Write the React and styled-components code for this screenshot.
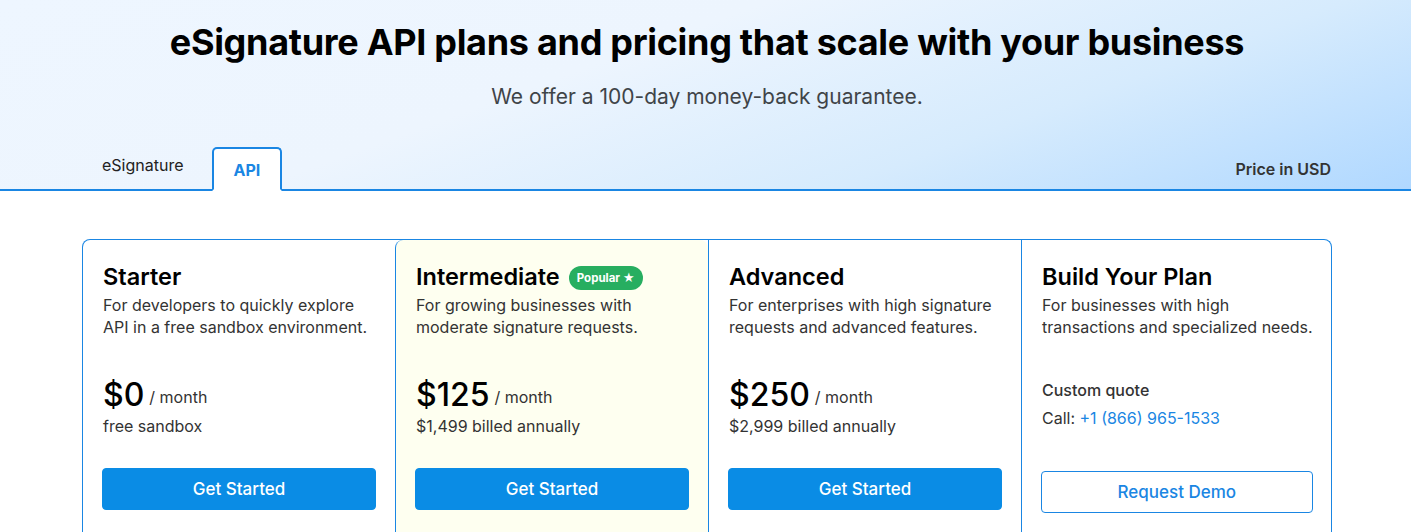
import React from "react";
import styled, { createGlobalStyle } from "styled-components";

const Global = createGlobalStyle`
  html, body { margin: 0; padding: 0; background: #fff; }
  body { font-family: Inter, "Noto Sans", Arial, sans-serif; color: #000; }
  * { box-sizing: border-box; }
`;

const Hero = styled.header`
  background: linear-gradient(160deg, #eef6ff 0%, #edf5fe 40%, #d6ebfd 70%, #b0d8ff 100%);
  border-bottom: 2px solid #1a86e3;
`;

const HeroInner = styled.div`
  max-width: 1253px;
  margin: 0 auto;
  padding-left: 3px;
  display: flex;
  flex-direction: column;
  align-items: center;
  padding-top: 18px;
`;

const Title = styled.h1`
  margin: 0;
  font-size: 36px;
  line-height: 48px;
  font-weight: 700;
  letter-spacing: -0.3px;
  color: #000;
`;

const Subtitle = styled.p`
  margin: 17px 0 0;
  font-size: 21px;
  line-height: 28px;
  color: #3f4448;
`;

const TabBar = styled.div`
  align-self: stretch;
  display: flex;
  align-items: flex-end;
  margin-top: 36px;
  margin-bottom: -2px;
`;

const Tab = styled.button`
  font-family: inherit;
  font-size: 16px;
  line-height: 1;
  height: 44px;
  padding: ${(p) => (p.$active ? "2px 20px 0" : "0 18px 9px")};
  margin-right: 8px;
  cursor: pointer;
  background: ${(p) => (p.$active ? "#fff" : "transparent")};
  color: ${(p) => (p.$active ? "#1a86e3" : "#222")};
  font-weight: ${(p) => (p.$active ? 700 : 400)};
  border: 2px solid ${(p) => (p.$active ? "#1a86e3" : "transparent")};
  border-bottom-color: ${(p) => (p.$active ? "#fff" : "transparent")};
  border-radius: 5px 5px 0 0;
  display: flex;
  align-items: center;
`;

const PriceNote = styled.div`
  margin-left: auto;
  font-size: 16px;
  font-weight: 600;
  color: #333;
  padding-bottom: 12px;
  padding-right: 1px;
`;

const Main = styled.main`
  max-width: 1253px;
  margin: 48px auto 0;
  padding-left: 3px;
`;

const Grid = styled.div`
  display: grid;
  grid-template-columns: 312px 313px 313px 1fr;
  border: 1px solid #1a86e3;
  border-bottom: none;
  border-radius: 8px 8px 0 0;
  min-height: 300px;
`;

const Card = styled.section`
  display: flex;
  flex-direction: column;
  padding: 21px 19px 0 19px;
  border-left: ${(p) => (p.$first ? "none" : "1px solid #1a86e3")};
  background: ${(p) => (p.$highlight ? "#fefff0" : "transparent")};
  border-radius: ${(p) => (p.$highlight ? "8px 8px 0 0" : "0")};
  background-clip: padding-box;
`;

const NameRow = styled.div`
  display: flex;
  align-items: center;
  gap: 9px;
  height: 32px;
  padding-left: 1px;
`;

const Name = styled.h2`
  margin: 0;
  font-size: 23.5px;
  line-height: 32px;
  font-weight: 600;
  color: #000;
`;

const Badge = styled.span`
  background: #27ae60;
  color: #fff;
  font-size: 11.5px;
  font-weight: 700;
  line-height: 24px;
  height: 24px;
  padding: 0 8px;
  border-radius: 12px;
  margin-top: 1px;
`;

const Desc = styled.p`
  margin: 1px 0 0;
  padding-left: 1px;
  font-size: 16px;
  line-height: 22px;
  color: #333;
  white-space: nowrap;
`;

const PriceBlock = styled.div`
  margin-top: 37px;
  min-height: 62px;
  padding-left: 1px;
`;

const PriceLine = styled.div`
  display: flex;
  align-items: center;
  gap: 5px;
  height: 40px;
`;

const Amount = styled.span`
  font-size: 32px;
  font-weight: 500;
  line-height: 40px;
  color: #000;
`;

const Per = styled.span`
  font-size: 16px;
  color: #333;
  padding-top: 4px;
`;

const SubPrice = styled.div`
  font-size: 16px;
  line-height: 22px;
  color: #333;
`;

const QuoteBlock = styled.div`
  margin-top: 41px;
  padding-left: 1px;
  display: flex;
  flex-direction: column;
  gap: 6px;
  min-height: 50px;
`;

const QuoteLine = styled.div`
  font-size: 16px;
  line-height: 22px;
  color: #333;
  font-weight: ${(p) => (p.$strong ? 500 : 400)};
`;

const Phone = styled.a`
  color: #1a86e3;
  text-decoration: none;
`;

const Button = styled.button`
  font-family: inherit;
  margin-top: ${(p) => (p.$outline ? "42px" : "31px")};
  height: 42px;
  width: 100%;
  border-radius: 4px;
  font-size: 17px;
  font-weight: 500;
  cursor: pointer;
  background: ${(p) => (p.$outline ? "#fff" : "#0a8ce5")};
  color: ${(p) => (p.$outline ? "#1a86e3" : "#fff")};
  border: 1px solid ${(p) => (p.$outline ? "#1a86e3" : "#0a8ce5")};
`;

const plans = [
  {
    name: "Starter",
    desc: ["For developers to quickly explore", "API in a free sandbox environment."],
    amount: "$0",
    sub: "free sandbox",
  },
  {
    name: "Intermediate",
    popular: true,
    desc: ["For growing businesses with", "moderate signature requests."],
    amount: "$125",
    sub: "$1,499 billed annually",
  },
  {
    name: "Advanced",
    desc: ["For enterprises with high signature", "requests and advanced features."],
    amount: "$250",
    sub: "$2,999 billed annually",
  },
];

export default function App() {
  return (
    <>
      <Global />
      <Hero>
        <HeroInner>
          <Title>eSignature API plans and pricing that scale with your business</Title>
          <Subtitle>We offer a 100-day money-back guarantee.</Subtitle>
          <TabBar>
            <Tab>eSignature</Tab>
            <Tab $active>API</Tab>
            <PriceNote>Price in USD</PriceNote>
          </TabBar>
        </HeroInner>
      </Hero>
      <Main>
        <Grid>
          {plans.map((p, i) => (
            <Card key={p.name} $first={i === 0} $highlight={p.popular}>
              <NameRow>
                <Name>{p.name}</Name>
                {p.popular && <Badge>Popular ★</Badge>}
              </NameRow>
              <Desc>
                {p.desc[0]}
                <br />
                {p.desc[1]}
              </Desc>
              <PriceBlock>
                <PriceLine>
                  <Amount>{p.amount}</Amount>
                  <Per>/ month</Per>
                </PriceLine>
                <SubPrice>{p.sub}</SubPrice>
              </PriceBlock>
              <Button>Get Started</Button>
            </Card>
          ))}
          <Card>
            <NameRow>
              <Name>Build Your Plan</Name>
            </NameRow>
            <Desc>
              For businesses with high
              <br />
              transactions and specialized needs.
            </Desc>
            <QuoteBlock>
              <QuoteLine $strong>Custom quote</QuoteLine>
              <QuoteLine>
                Call: <Phone href="#">+1 (866) 965-1533</Phone>
              </QuoteLine>
            </QuoteBlock>
            <Button $outline>Request Demo</Button>
          </Card>
        </Grid>
      </Main>
    </>
  );
}
